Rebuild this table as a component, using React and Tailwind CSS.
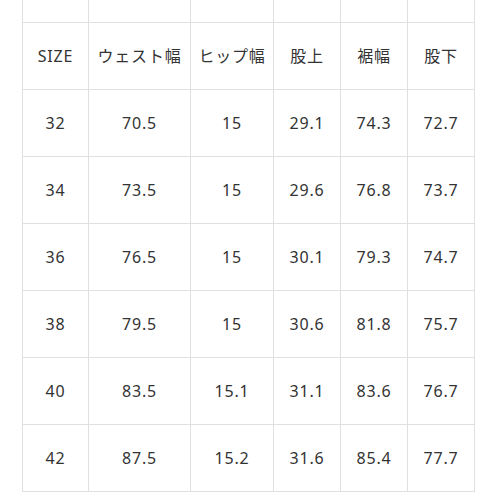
import React from 'react';

const headers = ['SIZE', 'ウェスト幅', 'ヒップ幅', '股上', '裾幅', '股下'];

const rows = [
  ['32', '70.5', '15', '29.1', '74.3', '72.7'],
  ['34', '73.5', '15', '29.6', '76.8', '73.7'],
  ['36', '76.5', '15', '30.1', '79.3', '74.7'],
  ['38', '79.5', '15', '30.6', '81.8', '75.7'],
  ['40', '83.5', '15.1', '31.1', '83.6', '76.7'],
  ['42', '87.5', '15.2', '31.6', '85.4', '77.7'],
];

const Cell = ({ children }) => (
  <div className="h-[67px] flex items-center justify-center border-r border-b border-[#e0e0e0]">
    {children}
  </div>
);

export default function App() {
  return (
    <div
      className="w-[498px] h-[498px] bg-white overflow-hidden text-[16px] tracking-[0.05em] text-[#333]"
      style={{ fontFamily: '"Noto Sans", "Noto Sans CJK JP", sans-serif' }}
    >
      <div className="ml-[22px] w-[453px] border-l border-[#e0e0e0] grid grid-cols-[66px_102px_83px_67px_67px_67px]">
        {/* row cut off by the top edge */}
        {headers.map((h) => (
          <div key={'top-' + h} className="h-[23px] border-r border-b border-[#e0e0e0]" />
        ))}
        {headers.map((h) => (
          <Cell key={h}>{h}</Cell>
        ))}
        {rows.map((r) =>
          r.map((v, i) => <Cell key={r[0] + '-' + i}>{v}</Cell>)
        )}
      </div>
    </div>
  );
}
